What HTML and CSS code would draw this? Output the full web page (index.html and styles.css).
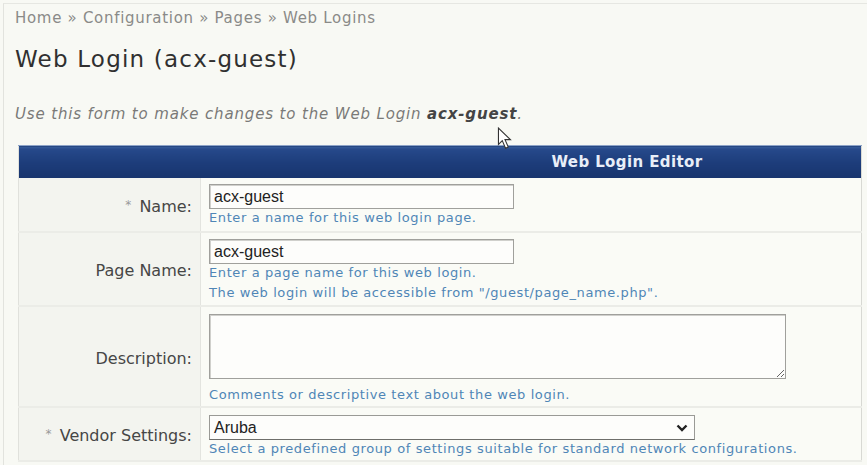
FILE: index.html
```html
<!DOCTYPE html>
<html>
<head>
<meta charset="utf-8">
<link rel="stylesheet" href="styles.css">
</head>
<body>
<div class="page">
  <div class="crumbs">Home » Configuration » Pages » Web Logins</div>
  <h1 class="title">Web Login (acx-guest)</h1>
  <p class="intro">Use this form to make changes to the Web Login <b>acx-guest</b>.</p>
  <table class="editor">
    <tr><th colspan="2" class="head">Web Login Editor</th></tr>
    <tr class="r1">
      <td class="label"><span class="req">*</span> Name:</td>
      <td class="field">
        <input class="txt" type="text" value="acx-guest">
        <div class="hint">Enter a name for this web login page.</div>
      </td>
    </tr>
    <tr class="r2">
      <td class="label">Page Name:</td>
      <td class="field">
        <input class="txt" type="text" value="acx-guest">
        <div class="hint">Enter a page name for this web login.</div>
        <div class="hint hint2">The web login will be accessible from "/guest/page_name.php".</div>
      </td>
    </tr>
    <tr class="r3">
      <td class="label">Description:</td>
      <td class="field">
        <textarea class="area"></textarea>
        <div class="hint hint3">Comments or descriptive text about the web login.</div>
      </td>
    </tr>
    <tr class="r4">
      <td class="label"><span class="req">*</span> Vendor Settings:</td>
      <td class="field">
        <div class="sel"><span class="sel-val">Aruba</span>
          <svg class="chev" width="12" height="8" viewBox="0 0 12 8"><path d="M1.5 1.5 L6 6 L10.5 1.5" fill="none" stroke="#222" stroke-width="2.4"/></svg>
        </div>
        <div class="hint">Select a predefined group of settings suitable for standard network configurations.</div>
      </td>
    </tr>
  </table>
  <svg class="cursor" width="16" height="24" viewBox="0 0 14 22"><path d="M1 1 L1 16 L4.5 12.5 L7.5 19.5 L10 18.4 L7 11.6 L12 11.6 Z" fill="#fff" stroke="#333" stroke-width="1"/></svg>
</div>
</body>
</html>
```
FILE: styles.css
```css
html, body {
  margin: 0;
  padding: 0;
  background: #f8f9f4;
}
body {
  font-family: "DejaVu Sans", Verdana, sans-serif;
  width: 867px;
  height: 465px;
  overflow: hidden;
}
.page {
  position: relative;
  margin: 3px 0 0 3px;
  border-left: 1px solid #e2e3de;
  border-top: 1px solid #e6e7e2;
  padding: 5px 0 0 11px;
  height: 470px;
}
.crumbs {
  font-size: 15px;
  line-height: 18px;
  letter-spacing: 0.7px;
  color: #8a8a88;
}
.title {
  margin: 19px 0 0 0;
  font-size: 23px;
  line-height: 27px;
  letter-spacing: 1.2px;
  font-weight: normal;
  color: #303030;
}
.intro {
  margin: 32px 0 0 0;
  font-size: 15px;
  line-height: 18px;
  letter-spacing: 0.85px;
  font-style: italic;
  color: #7a7a78;
}
.intro b {
  color: #444;
}
.editor {
  margin: 22px 0 0 3px;
  width: 844px;
  border-collapse: collapse;
  border-right: 1px solid #d8d9d4;
  border-left: 1px solid #e0e1dc;
}
.head {
  height: 32px;
  padding: 0 0 0 374px;
  background: linear-gradient(#3a5f9c 0, #26498a 3px, #1d3d7b 50%, #18356d 100%);
  color: #e8eef8;
  font-size: 15px;
  letter-spacing: 0.4px;
  font-weight: bold;
  text-align: center;
  border-top: 1px solid #8ea4c8;
}
.label {
  width: 173px;
  padding: 3px 8px 0 0;
  text-align: right;
  vertical-align: middle;
  font-size: 16px;
  color: #464646;
  background: #f3f4ef;
  border-right: 1px solid #e3e4df;
  border-bottom: 2px solid #ebece7;
  white-space: nowrap;
}
.req {
  color: #999;
  font-size: 12px;
  vertical-align: 3px;
  margin-right: 3px;
}
.field {
  padding: 6px 0 4px 8px;
  vertical-align: top;
  background: #fafbf6;
  border-bottom: 2px solid #ebece7;
}
.r2 .field { padding-bottom: 3px; }
.r3 .field { padding-bottom: 2px; }
.r4 .field { padding-bottom: 2px; }
.txt {
  display: block;
  box-sizing: border-box;
  width: 305px;
  height: 25px;
  margin: 0;
  padding: 0 4px;
  border: 1px solid #a0a09c;
  box-shadow: inset 1px 1px 0 #d0d0cc;
  background: #fdfdfb;
  font-family: "Liberation Sans", Arial, sans-serif;
  font-size: 16px;
  color: #222;
}
.hint {
  font-size: 13px;
  line-height: 18px;
  letter-spacing: 0.6px;
  color: #4f86b6;
  white-space: nowrap;
}
.hint2 {
  margin-top: 2px;
}
.area {
  display: block;
  box-sizing: border-box;
  width: 577px;
  height: 65px;
  margin: 1px 0 0 0;
  border: 1px solid #a0a09c;
  box-shadow: inset 1px 1px 0 #d0d0cc;
  background: #fdfdfb;
  resize: both;
}
.hint3 {
  margin-top: 7px;
}
.sel {
  box-sizing: border-box;
  width: 486px;
  height: 25px;
  margin-top: 1px;
  border: 1px solid #9a9a96;
  border-bottom-color: #6e6e6a;
  background: #fdfdfb;
  display: flex;
  align-items: center;
  justify-content: space-between;
  padding: 0 6px 0 4px;
}
.sel-val {
  font-family: "Liberation Sans", Arial, sans-serif;
  font-size: 16px;
  color: #222;
}
.chev {
  display: block;
}
.cursor {
  position: absolute;
  left: 493px;
  top: 123px;
}
```
